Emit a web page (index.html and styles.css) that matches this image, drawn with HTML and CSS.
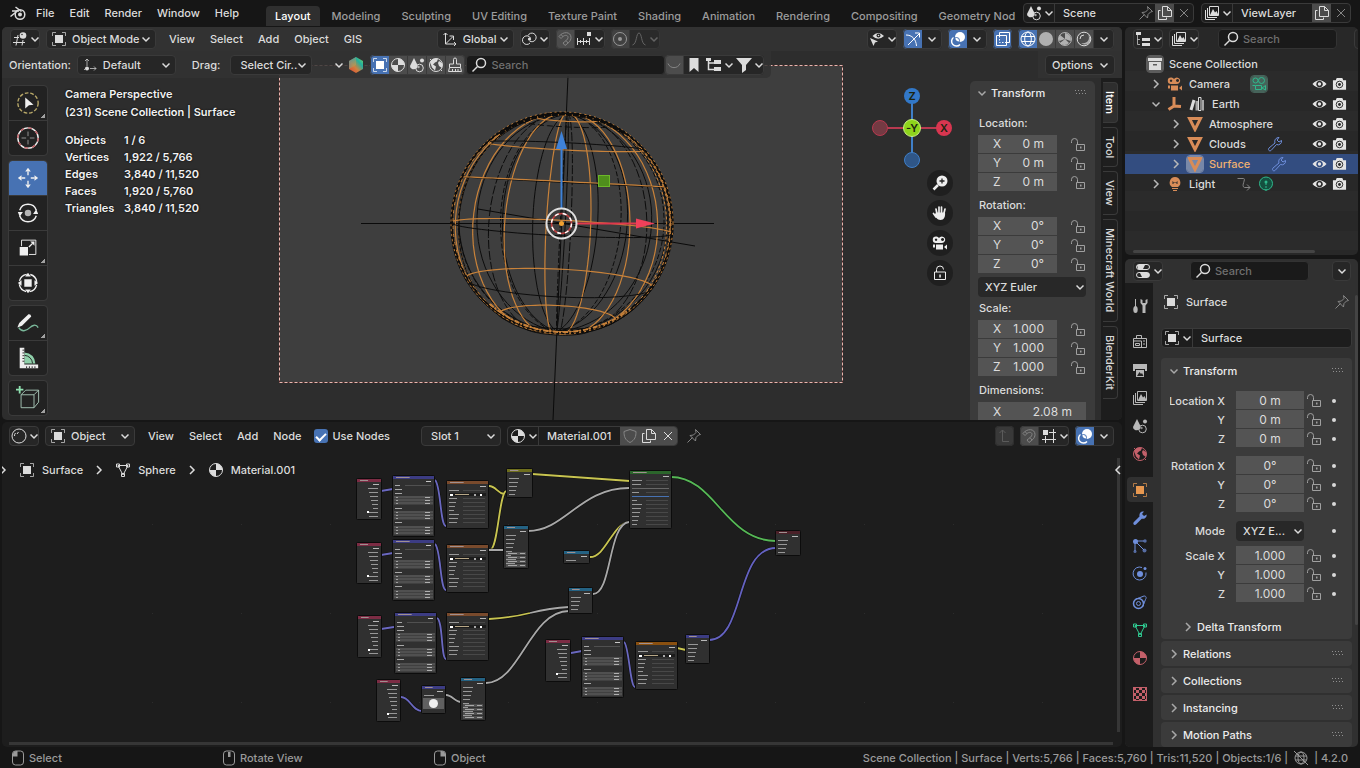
FILE: index.html
```html
<!DOCTYPE html>
<html lang="en">
<head>
    <meta charset="UTF-8">
    <meta name="viewport" content="width=device-width, initial-scale=1.0">
    <title>Blender</title>
    <link rel="stylesheet" href="styles.css">
</head>
<body>
<svg class="sprite" aria-hidden="true">
    <symbol id="blender" viewBox="0 0 16 16"><path class="s2" d="M.5 11.500L8 5.500M2 6h7M5.500 2l6 4.500"/><circle class="s2" cx="10" cy="9.500" r="4.800"/><circle class="f" cx="10" cy="9.500" r="2"/></symbol>
    <symbol id="down" viewBox="0 0 8 16"><path class="s2" d="M.5 6.500L4 10l3.500-3.500"/></symbol>
    <symbol id="right" viewBox="0 0 8 16"><path class="s2" d="M2 4l4 4-4 4"/></symbol>
    <symbol id="left" viewBox="0 0 8 16"><path class="s2" d="M6 4L2 8l4 4"/></symbol>
    <symbol id="editor" viewBox="0 0 16 16"><path class="s" d="M2 6.500h5M1 11.500h12M6 4L4 14.500M11 9l-1 5.500"/><circle class="f" cx="11" cy="4.500" r="3.300"/><circle cx="10" cy="3.500" r=".8" fill="#333"/></symbol>
    <symbol id="object" viewBox="0 0 16 16"><path class="s dim" d="M1.500 5V1.500H5M11 1.500h3.500V5M14.500 11v3.500H11M5 14.500H1.500V11"/><rect class="f" x="4" y="4" width="8" height="8"/></symbol>
    <symbol id="orient" viewBox="0 0 16 16"><path class="s dim" d="M5 9V2M3 4l2-2 2 2M8 11.500h6M12 9.500l2 2-2 2M2 13l1-1"/><circle class="f" cx="5" cy="11.500" r="2"/></symbol>
    <symbol id="global" viewBox="0 0 16 16"><path class="s" d="M3.500 13V2M1.500 4l2-2 2 2M3.500 13H14M12 11l2 2-2 2M3.500 13L11 5.500M7.500 5H11.500V9"/></symbol>
    <symbol id="pivot" viewBox="0 0 16 16"><path class="s" d="M9 12a4.300 4.300 0 1 1 .5-5M7 4.500A4.300 4.300 0 1 1 8.500 10"/><circle class="f" cx="8.500" cy="8" r="1.600"/></symbol>
    <symbol id="magnet" viewBox="0 0 16 16"><path class="s" d="M2 5.500C6 0 14 .5 14 6.500c0 4-3.500 6-6 8l-2-2.500C8.500 10 11 8.500 11 6.500 11 3.500 7 3.500 4 7.500zM4 3.500l2 2.200M9 9.500l2 2.500"/></symbol>
    <symbol id="increment" viewBox="0 0 16 16"><path class="s" d="M1.500 7v7M4.500 9v3M7.500 7v7M10.500 9v3M13.500 7v7M1.500 10.500h12"/><rect class="f" x="11" y="1" width="4" height="4"/></symbol>
    <symbol id="prop" viewBox="0 0 16 16"><circle class="s" cx="8" cy="8" r="6.500"/><circle class="f" cx="8" cy="8" r="2"/></symbol>
    <symbol id="falloff" viewBox="0 0 16 16"><path class="s" d="M1.500 14C6 13 5 2 8 2s2 11 6.500 12"/></symbol>
    <symbol id="viseye" viewBox="0 0 16 16"><path class="f" d="M1 7l8 3.500-3 1L4.500 15z"/><path class="f" d="M3.500 5Q9-1 15 5 9 10.500 3.500 5z"/><circle cx="9.500" cy="4.500" r="2" fill="#222"/><circle class="f" cx="9.500" cy="4.500" r=".8"/></symbol>
    <symbol id="arc" viewBox="0 0 16 16"><path class="s" d="M1 4c6 0 10 4 10.500 11M3 14L14 3M10 2h4.500v4.500"/></symbol>
    <symbol id="overlay" viewBox="0 0 16 16"><circle class="f" cx="10" cy="6" r="5"/><path class="s2" d="M3.500 6.500A4.800 4.800 0 1 0 10 13.500"/><circle cx="6.500" cy="9.500" r="3" fill="none" stroke="#4772b3"/></symbol>
    <symbol id="xray" viewBox="0 0 16 16"><path class="s" d="M1.500 4.500h10v10h-10zM4.500 4V1.500h10v10H12"/><path class="s" stroke-dasharray="1.500 1.500" d="M4.500 5v6.500H11"/></symbol>
    <symbol id="globe" viewBox="0 0 16 16"><circle class="s" cx="8" cy="8" r="7"/><ellipse class="s" cx="8" cy="8" rx="3.300" ry="7"/><path class="s" d="M1.500 5.500h13M1.500 10.500h13"/></symbol>
    <symbol id="ball" viewBox="0 0 16 16"><circle class="f dim" cx="8" cy="8" r="7"/></symbol>
    <symbol id="matball" viewBox="0 0 16 16"><circle class="s" cx="8" cy="8" r="6.500"/><path class="f" d="M8 1.500V8h6.500A6.500 6.500 0 0 0 8 1.500zM8 8v6.500A6.500 6.500 0 0 1 1.500 8z"/></symbol>
    <symbol id="preview" viewBox="0 0 16 16"><circle class="s dim" cx="8" cy="8" r="6.500"/><path class="f dim" d="M8 8V2a6 6 0 0 1 5.500 8zM8 8L3 4a6 6 0 0 0-.5 6zM8 8l-5 4a6 6 0 0 0 9 0z"/></symbol>
    <symbol id="rendered" viewBox="0 0 16 16"><circle class="s" cx="8" cy="8" r="6.800"/><path class="f dim" d="M12 3.500c3 5-1.500 10-7 8.500 5 4 11 0 9-6z"/><path class="s" d="M4 8a4 4 0 0 1 4-4"/></symbol>
    <symbol id="shader" viewBox="0 0 16 16"><circle class="s" cx="8" cy="8" r="7"/><path class="s" d="M6 6l1.500-2M3.500 8a4 4 0 0 1 1-3"/></symbol>
    <symbol id="scene" viewBox="0 0 16 16"><path class="f" d="M5 1l3.500 7A3.500 3.500 0 0 1 6 12 3.500 3.500 0 0 1 1 9z"/><circle class="s" cx="10.500" cy="11" r="3.800"/><circle class="f" cx="13" cy="3.500" r="2"/><circle class="f dim" cx="9.500" cy="10" r="1.200"/></symbol>
    <symbol id="world" viewBox="0 0 16 16"><circle class="s" cx="8" cy="8" r="6.500"/><path class="f" d="M2 5l3-3 5-.5-1 3-2 1-2 2 3 2-1 4-3-3zM11 4l3 2v5l-3-2-1-3z"/><path class="s" d="M2 2l2 2M14 14l-1.500-1.500"/></symbol>
    <symbol id="brush" viewBox="0 0 16 16"><path class="s" d="M6.500 7V2.500a1.500 1.500 0 0 1 3 0V7h4v3.500h-11V7zM2.500 10.500l-1 4h13l-1-4M5.500 14v-2M8.500 14v-2M11 14v-2"/></symbol>
    <symbol id="search" viewBox="0 0 16 16"><circle class="s2" cx="10" cy="6" r="4.500"/><path class="s2" d="M6.500 9.500L1.500 14.500"/></symbol>
    <symbol id="smile" viewBox="0 0 16 16"><path class="s" d="M2 6.500c2 5.500 10 5.500 12 0"/></symbol>
    <symbol id="bookmark" viewBox="0 0 16 16"><path class="f" d="M3.500 1h9v14L8 11l-4.500 4z"/></symbol>
    <symbol id="tree" viewBox="0 0 16 16"><path class="s2" d="M1 2h3M2.500 2v10.500H8M2.500 6H8"/><path class="f" d="M8 3h7v4H8zM8 10h7v4H8zM0 1h5v3H0z"/></symbol>
    <symbol id="outliner" viewBox="0 0 16 16"><path class="s dim" d="M2.500 4v9.500H5M2.500 8.500H5"/><path class="f" d="M1 1h5v3H1zM7 7h8v3H7zM7 12h8v3H7z"/></symbol>
    <symbol id="funnel" viewBox="0 0 16 16"><path class="f" d="M0 1h16l-6 7v5l-4 3V8z"/></symbol>
    <symbol id="zoom" viewBox="0 0 16 16"><circle class="f" cx="10" cy="6" r="5.500"/><path d="M10 3.500v5M7.500 6h5" stroke="#222" stroke-width="1.300"/><path d="M6 10l-4.500 4.500" stroke="currentColor" stroke-width="2.500"/></symbol>
    <symbol id="hand" viewBox="0 0 16 16"><path d="M5 9L4 4M7 8V2M9.500 8V2M12 8l1-4M4 12L1.500 8.500" fill="none" stroke="currentColor" stroke-width="1.700" stroke-linecap="round"/><path class="f" d="M4 7.500h9c.5 4-1 7.500-4.500 7.500S4 12 2.500 10z"/></symbol>
    <symbol id="movie" viewBox="0 0 16 16"><path class="f" fill-rule="evenodd" d="M4 1.500a3 3 0 0 1 3 1.500 3.300 3.300 0 1 1 3 5H4a3 3 0 1 1 0-6.500zM4 3.500a1.200 1.200 0 1 0 .1 0zM10.500 3a1.500 1.500 0 1 0 .1 0z"/><path class="f" d="M4 9.500h7v5H4zM12 12l3-2.500v5zM1 9.500h2v3H1z"/></symbol>
    <symbol id="moviedata" viewBox="0 0 16 16"><circle class="s" cx="4.500" cy="4.500" r="2.500"/><circle class="s" cx="10.500" cy="4.500" r="3"/><path class="s" d="M4.500 9.500h6v4h-6zM11 12l3.500-2.500v4.500zM1.500 9.500H4"/></symbol>
    <symbol id="lock" viewBox="0 0 16 16"><path class="s" d="M6.500 7.500h8v6h-8zM7.500 7V4.500a3 3 0 0 0-6 0V6"/><path class="f" d="M10 9.500h1.500v2H10z"/></symbol>
    <symbol id="biglock" viewBox="0 0 16 16"><path class="s" d="M2.500 7h11v7.500h-11zM4.500 7V4.500a3.500 3.500 0 0 1 7 0"/><path class="f" d="M7.300 9.500h1.500v3H7.300z"/></symbol>
    <symbol id="layers" viewBox="0 0 16 16"><path class="s" d="M5.500 1.500h9v9h-9zM3.500 3v9.500H13M1.500 5v9.500H11"/><path class="f" d="M6 10l3-6 2 3.500L12.500 6l2 4z"/></symbol>
    <symbol id="copy" viewBox="0 0 16 16"><path class="s" d="M5.500 1.500h5l4 4v6h-9zM10.500 1.500v4h4"/><path class="s" d="M3.500 5.500h-2v9h8v-2"/></symbol>
    <symbol id="x" viewBox="0 0 16 16"><path class="s" d="M4 4l8 8M12 4l-8 8"/></symbol>
    <symbol id="pin" viewBox="0 0 16 16"><path class="s" d="M9.500 1.500l5 5-2 .5-2.500 2.500-.5 3.500-5.500-5.500 3.500-.5L10 4.500zM6.500 9.500L1.500 14.500"/></symbol>
    <symbol id="box" viewBox="0 0 16 16"><path class="f" fill-rule="evenodd" d="M1 2h14v3H1zM2 6h12v8H2zm4 2v1.500h4V8z"/></symbol>
    <symbol id="empty" viewBox="0 0 16 16"><path class="s3" d="M7 1v9l7 .5M7 10l-5.500 3.500"/></symbol>
    <symbol id="books" viewBox="0 0 16 16"><path class="s3" d="M5 4L2 14"/><path class="f dim" d="M6.500 5H9v9.500H6.500zM13 4h2v10.500h-2z"/><path class="s" d="M9.500 1.500h2.500v13H9.500z"/></symbol>
    <symbol id="mesh" viewBox="0 0 16 16"><path class="s3" d="M2.500 2.500h11L8 13.500z"/></symbol>
    <symbol id="meshdata" viewBox="0 0 16 16"><path class="s" d="M3 3.500h10L8 13zM1.500 2h3v3h-3zM11.500 2h3v3h-3zM6.500 11.500h3v3h-3z"/></symbol>
    <symbol id="wrench" viewBox="0 0 16 16"><path class="s" d="M14.500 4.500a3.600 3.600 0 0 1-5 4L4 14.500c-1.500 1-3.500-.5-2-2.500L8 7c-1-3 1-5.500 4-5.500L10 4l2 2z"/></symbol>
    <symbol id="wrenchf" viewBox="0 0 16 16"><path class="f" d="M14.700 4.500a4 4 0 0 1-5 4.200L4 14.500c-1.800 1.200-3.500-.7-2.300-2.300L7.500 6.500C7 3 9 1 12 1.500L10 4l2 2z"/></symbol>
    <symbol id="light" viewBox="0 0 16 16"><path class="f" fill-rule="evenodd" d="M8 1a5.500 5.500 0 0 0-3 10h6A5.500 5.500 0 0 0 8 1zM5.500 5v3h1V6.500h3V8h1V5l-1 1h-3z"/><path class="s" d="M5 12.500h6M6 14.500h4"/></symbol>
    <symbol id="anim" viewBox="0 0 16 16"><path class="s" d="M1.500 2.500h6c3 0-3 8 1 9h5.500M11 8.500l3 3-3 3"/></symbol>
    <symbol id="lightdata" viewBox="0 0 16 16"><circle cx="8" cy="7.500" r="6.500" fill="#14503f"/><circle class="s" cx="8" cy="7.500" r="6.500"/><path class="s" stroke-dasharray="2 1" d="M8 7v8"/><circle class="f" cx="8" cy="6" r="1.500"/></symbol>
    <symbol id="eye" viewBox="0 0 16 16"><path class="f" fill-rule="evenodd" d="M.5 8Q8 0 15.500 8 8 16 .5 8zM8 4.500a3.500 3.500 0 1 0 .1 0z"/><circle class="f" cx="8" cy="8" r="1.800"/></symbol>
    <symbol id="photo" viewBox="0 0 16 16"><path class="f" d="M1 4h3l1-2.500h6L12 4h3v10H1z"/><circle cx="8" cy="8.500" r="3.500" fill="none" stroke="#262626"/><circle cx="8" cy="8.500" r="1.500" fill="#262626"/></symbol>
    <symbol id="props" viewBox="0 0 16 16"><rect class="s" x="1.500" y="1.500" width="13" height="5" rx="2.500"/><rect class="s" x="1.500" y="9.500" width="13" height="5" rx="2.500"/><path class="f" d="M2 2h8l-2 4H3zM5 10h9v4H7z"/></symbol>
    <symbol id="tools" viewBox="0 0 16 16"><path class="s" d="M3.500 1v9"/><ellipse class="f" cx="3.500" cy="11.500" rx="2.200" ry="3.500"/><path class="f" d="M8.500 1v4l2 2.500V15h3V7.500l2-2.500V1l-2 1v3h-3V2z"/></symbol>
    <symbol id="render" viewBox="0 0 16 16"><path class="s" d="M1.500 4.500h13v9h-13zM4.500 4V1.500h5V4M1.500 7h8v6M11 7h2M11 10h2"/><path class="s" d="M3.500 9.500h4v2h-4z"/></symbol>
    <symbol id="output" viewBox="0 0 16 16"><path class="f" d="M1 2h14v7h-2V7H3v2H1zM4 8h8v7H4z"/><path d="M5 14l2.500-4 1.500 2 1-1 1.500 3z" fill="#222"/></symbol>
    <symbol id="particles" viewBox="0 0 16 16"><path class="s" d="M3 3v10M3 3h9M4 4l8 8"/><circle class="f" cx="3.500" cy="3.500" r="2.500"/><circle class="f dim" cx="13" cy="3" r="1.700"/><circle class="f dim" cx="3" cy="13.500" r="1.500"/><circle class="f dim" cx="12.500" cy="12.500" r="2"/></symbol>
    <symbol id="physics" viewBox="0 0 16 16"><path class="s" d="M14 6.500a6.500 6.500 0 1 1-4-5"/><circle class="f" cx="8" cy="8" r="3"/><circle class="f" cx="13" cy="2.500" r="1.500"/></symbol>
    <symbol id="constraint" viewBox="0 0 16 16"><circle class="s2" cx="6.500" cy="9.500" r="5"/><circle class="s" cx="6.500" cy="9.500" r="2"/><path class="s" d="M3 5.500L12 2c2.500 0 2.500 2 1.500 3.500L10.500 13"/></symbol>
    <symbol id="checker" viewBox="0 0 16 16"><rect class="s" x="1.500" y="1.500" width="13" height="13"/><path class="f" d="M1 1h3v3H1zM7 1h3v3H7zM13 1h2v3h-2zM4 4h3v3H4zM10 4h3v3h-3zM1 7h3v3H1zM7 7h3v3H7zM13 7h2v3h-2zM4 10h3v3H4zM10 10h3v3h-3zM1 13h3v2H1zM7 13h3v2H7zM13 13h2v2h-2z"/></symbol>
    <symbol id="shield" viewBox="0 0 16 16"><path class="s" d="M8 1.500l6 2c0 5-1 8.500-6 11-5-2.500-6-6-6-11z"/></symbol>
    <symbol id="parent" viewBox="0 0 16 16"><path class="s" d="M6.500 2v11.500H13M3.500 5l3-3 3 3"/></symbol>
    <symbol id="gridsnap" viewBox="0 0 16 16"><path class="s" d="M4.500 8v7M12.500 1v14M1 11.500h14M8 4.500h7"/><rect class="f" x="2" y="2" width="5" height="5"/></symbol>
    <symbol id="mouse" viewBox="0 0 16 16"><rect class="s" x="2.500" y="1" width="11" height="14" rx="3"/></symbol>
    <symbol id="offline" viewBox="0 0 16 16"><circle class="s" cx="8" cy="8" r="6"/><ellipse class="s" cx="8" cy="8" rx="3" ry="6"/><path class="s" d="M2.500 6h11M2.500 10h11M1 1l14 14"/></symbol>
    <symbol id="dots" viewBox="0 0 12 6"><path class="f" d="M0 0h1v1H0zM3 0h1v1H3zM6 0h1v1H6zM9 0h1v1H9zM1 3h1v1H1zM4 3h1v1H4zM7 3h1v1H7zM10 3h1v1h-1z"/></symbol>

    <symbol id="t-select" viewBox="0 0 26 26"><circle cx="13" cy="13" r="11" fill="none" stroke="#b8a868" stroke-width="1.500" stroke-dasharray="4 2"/><path class="f" d="M10 7l9 8-5 .5L10 19z"/></symbol>
    <symbol id="t-cursor" viewBox="0 0 26 26"><circle cx="13" cy="13" r="11" fill="none" stroke="#eee" stroke-width="1.500"/><circle cx="13" cy="13" r="11" fill="none" stroke="#c05a60" stroke-width="1.500" stroke-dasharray="4 4.600"/><path d="M13 6v5M13 15v5M6 13h5M15 13h5" stroke="#999"/></symbol>
    <symbol id="t-move" viewBox="0 0 26 26"><path class="f" d="M13 2l3 4h-6zM13 24l3-4h-6zM2 13l4-3v6zM24 13l-4-3v6z"/><path class="s2" d="M13 6v4M13 16v4M6 13h4M16 13h4"/></symbol>
    <symbol id="t-rotate" viewBox="0 0 26 26"><path class="s2" d="M4 10a9.500 9.500 0 0 1 18 0M4 16a9.500 9.500 0 0 0 18 0"/><path class="f" d="M2 12h5.500L4 17zM24 14h-5.500L22 9z"/><circle class="f dim" cx="13" cy="13" r="3.500"/></symbol>
    <symbol id="t-scale" viewBox="0 0 26 26"><path class="s" d="M6 11V4.500h15.500V20H14"/><path class="f" d="M4 12h9v9H4zM20 6v4.500L15.500 6z"/><path class="s2" d="M14 12l4-4"/></symbol>
    <symbol id="t-trans" viewBox="0 0 26 26"><circle class="s2" cx="13" cy="13" r="9.500" stroke-dasharray="11 4" stroke-dashoffset="-2"/><path class="f" d="M9 9h8v8H9zM13 2l3 4h-6zM13 24l3-4h-6zM2 13l4-3v6zM24 13l-4-3v6z"/></symbol>
    <symbol id="t-pen" viewBox="0 0 26 26"><path d="M3 18c3 5 8 4 12 0 3-3 7-4 9 0" fill="none" stroke="#7ab89a" stroke-width="1.500"/><path class="f" d="M1.500 18l2-5 10-9.500q2.500-.5 3 2.500l-10 10z"/></symbol>
    <symbol id="t-measure" viewBox="0 0 26 26"><path d="M9 19V7q11 1 12 12z" fill="#8fd0aa"/><path d="M9 10q8 1 9 9" fill="none" stroke="#222"/><path d="M4 2h5v18h15v4H4z" fill="#eee"/><path d="M7 4.500h2M7 7.500h2M7 10.500h2M7 13.500h2M7 16.500h2M11.500 22v2M14.500 22v2M17.500 22v2M20.500 22v2" stroke="#222"/></symbol>
    <symbol id="t-cube" viewBox="0 0 26 26"><path d="M5.500 9.500h14v14h-14zM5.500 9.500l5-5h14l-5 5M24.500 4.500v13l-5 6" fill="none" stroke="#a8c8b8"/><path d="M4 0v8M0 4h8" stroke="#8fe0b0" stroke-width="2"/></symbol>
</svg>

<header class="topbar">
    <nav class="menus main-menus">
        <svg class="ic"><use href="#blender"/></svg>
        <button>File</button><button>Edit</button><button>Render</button><button>Window</button><button>Help</button>
    </nav>
    <nav class="workspaces">
        <button class="active">Layout</button><button>Modeling</button><button>Sculpting</button><button>UV Editing</button><button>Texture Paint</button><button>Shading</button><button>Animation</button><button>Rendering</button><button>Compositing</button><button>Geometry Nod</button>
    </nav>
    <div class="idblock">
        <button class="icdrop"><svg class="ic"><use href="#scene"/></svg><svg class="ch"><use href="#down"/></svg></button>
        <input class="idname" aria-label="Scene" value="Scene">
        <button class="sq off"><svg class="ic"><use href="#pin"/></svg></button>
        <button class="sq lit"><svg class="ic"><use href="#copy"/></svg></button>
        <button class="sq off"><svg class="ic"><use href="#x"/></svg></button>
    </div>
    <div class="idblock">
        <button class="icdrop"><svg class="ic"><use href="#layers"/></svg><svg class="ch"><use href="#down"/></svg></button>
        <input class="idname layer-name" aria-label="View layer" value="ViewLayer">
        <button class="sq lit"><svg class="ic"><use href="#copy"/></svg></button>
        <button class="sq off"><svg class="ic"><use href="#x"/></svg></button>
    </div>
</header>

<main class="screen">
    <div class="left">
        <!-- 3D viewport -->
        <section class="viewport">
            <svg class="scene" id="scene3d"></svg>
            <div class="head">
                <button class="icdrop box"><svg class="ic"><use href="#editor"/></svg><svg class="ch"><use href="#down"/></svg></button>
                <span class="pick mode"><svg class="ic"><use href="#object"/></svg><select aria-label="Mode"><option>Object Mode</option></select><svg class="ch"><use href="#down"/></svg></span>
                <nav class="menus"><button>View</button><button>Select</button><button>Add</button><button>Object</button><button>GIS</button></nav>
                <span class="grow-left"></span>
                <span class="pick global"><svg class="ic"><use href="#global"/></svg><select aria-label="Transform orientation"><option>Global</option></select><svg class="ch"><use href="#down"/></svg></span>
                <button class="icdrop box"><svg class="ic"><use href="#pivot"/></svg><svg class="ch"><use href="#down"/></svg></button>
                <span class="group"><button class="sq lit off"><svg class="ic"><use href="#magnet"/></svg></button><button class="icdrop"><svg class="ic"><use href="#increment"/></svg><svg class="ch"><use href="#down"/></svg></button></span>
                <span class="group off2"><button class="sq lit"><svg class="ic"><use href="#prop"/></svg></button><button class="icdrop off"><svg class="ic"><use href="#falloff"/></svg><svg class="ch"><use href="#down"/></svg></button></span>
                <span class="grow-right"></span>
                <button class="icdrop box"><svg class="ic"><use href="#viseye"/></svg><svg class="ch"><use href="#down"/></svg></button>
                <span class="group"><button class="sq on"><svg class="ic"><use href="#arc"/></svg></button><button class="sq more-opts"><svg class="ch"><use href="#down"/></svg></button></span>
                <span class="group"><button class="sq on"><svg class="ic"><use href="#overlay"/></svg></button><button class="sq more-opts"><svg class="ch"><use href="#down"/></svg></button></span>
                <span class="group"><button class="sq on"><svg class="ic"><use href="#xray"/></svg></button></span>
                <span class="group"><button class="sq on"><svg class="ic"><use href="#globe"/></svg></button><button class="sq lit"><svg class="ic"><use href="#ball"/></svg></button><button class="sq lit"><svg class="ic"><use href="#preview"/></svg></button><button class="sq lit"><svg class="ic"><use href="#rendered"/></svg></button><button class="sq more-opts"><svg class="ch"><use href="#down"/></svg></button></span>
            </div>
            <div class="toolhead">
                <div class="tool-left">
                    <label for="orientation">Orientation:</label>
                    <span class="pick orient"><svg class="ic"><use href="#orient"/></svg><select id="orientation"><option>Default</option></select><svg class="ch"><use href="#down"/></svg></span>
                    <label for="drag" class="drag-label">Drag:</label>
                    <span class="pick drag"><select id="drag"><option>Select Cir...</option></select><svg class="ch"><use href="#down"/></svg></span>
                    <button class="bare bk-menu" aria-label="BlenderKit"><svg class="ch"><use href="#down"/></svg>
                        <svg class="ic" viewBox="0 0 16 16"><defs><linearGradient id="hex" x1="1" y1="0" x2="0" y2="1"><stop offset="0" stop-color="#7ed957"/><stop offset=".3" stop-color="#20b0a0"/><stop offset=".6" stop-color="#d08040"/><stop offset="1" stop-color="#e04030"/></linearGradient><linearGradient id="hexb" x1="0" y1="0" x2="1" y2="1"><stop offset="0" stop-color="#1a9ad0"/><stop offset="1" stop-color="#e8a030"/></linearGradient></defs><path d="M8 0l7 4v8l-7 4-7-4V4z" fill="url(#hex)"/><path d="M8 0v8l-7 4V4z" fill="url(#hexb)" opacity=".6"/></svg></button>
                    <span class="group"><button class="sq on"><svg class="ic"><use href="#object"/></svg></button><button class="sq lit"><svg class="ic"><use href="#matball"/></svg></button><button class="sq lit"><svg class="ic"><use href="#scene"/></svg></button><button class="sq lit"><svg class="ic"><use href="#world"/></svg></button><button class="sq lit"><svg class="ic"><use href="#brush"/></svg></button></span>
                    <label class="search bk"><svg class="ic"><use href="#search"/></svg><input type="text" aria-label="Search assets" placeholder="Search"></label>
                    <span class="group"><button class="sq lit off"><svg class="ic"><use href="#smile"/></svg></button><button class="sq more-opts"><svg class="ic"><use href="#bookmark"/></svg></button><button class="icdrop"><svg class="ic"><use href="#tree"/></svg><svg class="ch"><use href="#down"/></svg></button><button class="icdrop"><svg class="ic"><use href="#funnel"/></svg><svg class="ch"><use href="#down"/></svg></button></span>
                </div>
                <div class="tool-right"><button class="options">Options<svg class="ch"><use href="#down"/></svg></button></div>
            </div>
            <div class="view-body">
                <div class="toolbar">
                    <div class="tgroup"><button class="more"><svg><use href="#t-select"/></svg></button><button><svg><use href="#t-cursor"/></svg></button></div>
                    <div class="tgroup"><button class="active"><svg><use href="#t-move"/></svg></button><button><svg><use href="#t-rotate"/></svg></button><button class="more"><svg><use href="#t-scale"/></svg></button><button><svg><use href="#t-trans"/></svg></button></div>
                    <div class="tgroup"><button class="more"><svg><use href="#t-pen"/></svg></button><button><svg><use href="#t-measure"/></svg></button></div>
                    <div class="tgroup"><button class="more"><svg><use href="#t-cube"/></svg></button></div>
                </div>
                <div class="stats">
                    <p>Camera Perspective</p>
                    <p>(231) Scene Collection | Surface</p>
                    <dl>
                        <dt>Objects</dt><dd>1 / 6</dd>
                        <dt>Vertices</dt><dd>1,922 / 5,766</dd>
                        <dt>Edges</dt><dd>3,840 / 11,520</dd>
                        <dt>Faces</dt><dd>1,920 / 5,760</dd>
                        <dt>Triangles</dt><dd>3,840 / 11,520</dd>
                    </dl>
                </div>
                <div class="gizmos">
                    <svg class="axes" viewBox="0 2 82 79">
                        <path d="M41 41V9M41 41v32" stroke="#3f7fc8" stroke-width="2"/>
                        <path d="M41 41h32M41 41H9" stroke="#b8394f" stroke-width="2"/>
                        <circle cx="9" cy="41" r="7.500" fill="#743a43" stroke="#b8394f"/>
                        <circle cx="41" cy="73" r="7.500" fill="#2f5687" stroke="#3f7fc8"/>
                        <circle cx="41" cy="9" r="8" fill="#3278c8"/><circle cx="73" cy="41" r="8" fill="#d83650"/>
                        <circle cx="41" cy="41" r="8.500" fill="#8ed41c" stroke="#c8f080"/>
                        <text x="41" y="13">Z</text><text x="73" y="45">X</text><text x="41" y="45">-Y</text>
                    </svg>
                    <button class="round"><svg class="ic"><use href="#zoom"/></svg></button>
                    <button class="round"><svg class="ic"><use href="#hand"/></svg></button>
                    <button class="round"><svg class="ic"><use href="#movie"/></svg></button>
                    <button class="round"><svg class="ic"><use href="#biglock"/></svg></button>
                </div>
                <div class="npanel">
                    <button class="ptitle"><svg class="ch"><use href="#down"/></svg>Transform<svg class="dots"><use href="#dots"/></svg></button>
                    <p>Location:</p>
                    <div class="fields" data-values="0 m,0 m,0 m"></div>
                    <p>Rotation:</p>
                    <div class="fields" data-values="0°,0°,0°"></div>
                    <span class="pick flat"><select aria-label="Rotation mode"><option>XYZ Euler</option></select><svg class="ch"><use href="#down"/></svg></span>
                    <p>Scale:</p>
                    <div class="fields" data-values="1.000,1.000,1.000"></div>
                    <p>Dimensions:</p>
                    <label class="num wide"><span>X</span><input value="2.08 m"></label>
                </div>
                <nav class="ntabs"><button class="active">Item</button><button>Tool</button><button>View</button><button>Minecraft World</button><button>BlenderKit</button></nav>
            </div>
        </section>

        <!-- shader editor -->
        <section class="nodes">
            <svg class="scene" id="graph"></svg>
            <div class="head">
                <button class="icdrop box"><svg class="ic"><use href="#shader"/></svg><svg class="ch"><use href="#down"/></svg></button>
                <span class="pick shtype"><svg class="ic"><use href="#object"/></svg><select aria-label="Shader type"><option>Object</option></select><svg class="ch"><use href="#down"/></svg></span>
                <nav class="menus"><button>View</button><button>Select</button><button>Add</button><button>Node</button></nav>
                <label class="check"><input type="checkbox" checked>Use Nodes</label>
                <span class="pick slot"><select aria-label="Slot"><option>Slot 1</option></select><svg class="ch"><use href="#down"/></svg></span>
                <div class="idblock">
                    <button class="icdrop"><svg class="ic"><use href="#matball"/></svg><svg class="ch"><use href="#down"/></svg></button>
                    <input class="idname" aria-label="Material" value="Material.001">
                    <button class="sq lit off"><svg class="ic"><use href="#shield"/></svg></button>
                    <button class="sq lit"><svg class="ic"><use href="#copy"/></svg></button>
                    <button class="sq lit"><svg class="ic"><use href="#x"/></svg></button>
                </div>
                <button class="bare off"><svg class="ic"><use href="#pin"/></svg></button>
                <span class="grow-left"></span>
                <span class="group off2"><button class="sq lit off"><svg class="ic"><use href="#parent"/></svg></button></span>
                <span class="group"><button class="sq lit off"><svg class="ic"><use href="#magnet"/></svg></button><button class="icdrop"><svg class="ic"><use href="#gridsnap"/></svg><svg class="ch"><use href="#down"/></svg></button></span>
                <span class="group"><button class="sq on"><svg class="ic"><use href="#overlay"/></svg></button><button class="sq more-opts"><svg class="ch"><use href="#down"/></svg></button></span>
            </div>
            <div class="crumbs">
                <svg class="ch"><use href="#right"/></svg>
                <span class="crumb"><svg class="ic"><use href="#object"/></svg>Surface</span>
                <svg class="ch"><use href="#right"/></svg>
                <span class="crumb"><svg class="ic"><use href="#meshdata"/></svg>Sphere</span>
                <svg class="ch"><use href="#right"/></svg>
                <span class="crumb"><svg class="ic"><use href="#matball"/></svg>Material.001</span>
                <svg class="ch last"><use href="#left"/></svg>
            </div>
        </section>
    </div>

    <div class="side">
        <section class="outliner">
            <div class="head">
                <button class="icdrop box"><svg class="ic"><use href="#outliner"/></svg><svg class="ch"><use href="#down"/></svg></button>
                <button class="icdrop box"><svg class="ic"><use href="#layers"/></svg><svg class="ch"><use href="#down"/></svg></button>
                <label class="search out"><svg class="ic"><use href="#search"/></svg><input type="text" aria-label="Filter outliner" placeholder="Search"></label>
                <button class="icdrop box"><svg class="ic"><use href="#funnel"/></svg></button>
            </div>
            <ul class="rows">
                <li class="root"><svg class="ic hl"><use href="#box"/></svg>Scene Collection</li>
                <li class="l1"><svg class="ch"><use href="#right"/></svg><svg class="ic obj"><use href="#movie"/></svg>Camera<svg class="ic data hl far"><use href="#moviedata"/></svg><span class="vis"><svg class="ic"><use href="#eye"/></svg><svg class="ic"><use href="#photo"/></svg></span></li>
                <li class="l1"><svg class="ch"><use href="#down"/></svg><svg class="ic obj"><use href="#empty"/></svg><svg class="ic books"><use href="#books"/></svg>Earth<span class="vis"><svg class="ic"><use href="#eye"/></svg><svg class="ic"><use href="#photo"/></svg></span></li>
                <li class="l2"><svg class="ch"><use href="#right"/></svg><svg class="ic obj"><use href="#mesh"/></svg>Atmosphere<span class="vis"><svg class="ic"><use href="#eye"/></svg><svg class="ic"><use href="#photo"/></svg></span></li>
                <li class="l2"><svg class="ch"><use href="#right"/></svg><svg class="ic obj"><use href="#mesh"/></svg>Clouds<svg class="ic mod far"><use href="#wrench"/></svg><span class="vis"><svg class="ic"><use href="#eye"/></svg><svg class="ic"><use href="#photo"/></svg></span></li>
                <li class="l2 selected"><svg class="ch"><use href="#right"/></svg><svg class="ic obj hl"><use href="#mesh"/></svg>Surface<svg class="ic mod far"><use href="#wrench"/></svg><span class="vis"><svg class="ic"><use href="#eye"/></svg><svg class="ic"><use href="#photo"/></svg></span></li>
                <li class="l1"><svg class="ch"><use href="#right"/></svg><svg class="ic obj"><use href="#light"/></svg>Light<svg class="ic far muted"><use href="#anim"/></svg><svg class="ic data"><use href="#lightdata"/></svg><span class="vis"><svg class="ic"><use href="#eye"/></svg><svg class="ic"><use href="#photo"/></svg></span></li>
            </ul>
            <div class="hscroll"></div>
        </section>

        <section class="properties">
            <div class="head">
                <button class="icdrop box"><svg class="ic"><use href="#props"/></svg><svg class="ch"><use href="#down"/></svg></button>
                <label class="search prop"><svg class="ic"><use href="#search"/></svg><input type="text" aria-label="Search properties" placeholder="Search"></label>
                <button class="sq box"><svg class="ch"><use href="#down"/></svg></button>
            </div>
            <div class="prop-body">
                <nav class="ptabs">
                    <button class="gap"><svg class="ic"><use href="#tools"/></svg></button>
                    <button><svg class="ic"><use href="#render"/></svg></button>
                    <button><svg class="ic"><use href="#output"/></svg></button>
                    <button><svg class="ic"><use href="#layers"/></svg></button>
                    <button><svg class="ic"><use href="#scene"/></svg></button>
                    <button class="gap red"><svg class="ic"><use href="#world"/></svg></button>
                    <button class="active"><svg class="ic"><use href="#object"/></svg></button>
                    <button class="blue"><svg class="ic"><use href="#wrenchf"/></svg></button>
                    <button class="blue"><svg class="ic"><use href="#particles"/></svg></button>
                    <button class="blue"><svg class="ic"><use href="#physics"/></svg></button>
                    <button class="blue"><svg class="ic"><use href="#constraint"/></svg></button>
                    <button class="green"><svg class="ic"><use href="#meshdata"/></svg></button>
                    <button class="gap red"><svg class="ic"><use href="#matball"/></svg></button>
                    <button class="red"><svg class="ic"><use href="#checker"/></svg></button>
                </nav>
                <div class="panels">
                    <div class="context"><svg class="ic"><use href="#object"/></svg>Surface<svg class="ic muted"><use href="#pin"/></svg></div>
                    <div class="idblock wide">
                        <button class="icdrop"><svg class="ic"><use href="#object"/></svg><svg class="ch"><use href="#down"/></svg></button>
                        <input class="idname" aria-label="Object name" value="Surface">
                    </div>
                    <div class="panel">
                        <button class="ptitle"><svg class="ch"><use href="#down"/></svg>Transform<svg class="dots"><use href="#dots"/></svg></button>
                        <div class="pfields" data-name="Location" data-values="0 m,0 m,0 m"></div>
                        <div class="pfields" data-name="Rotation" data-values="0°,0°,0°"></div>
                        <div class="prow"><label for="pmode">Mode</label><span class="pick flat"><select id="pmode"><option>XYZ E...</option></select><svg class="ch"><use href="#down"/></svg></span><span></span><i class="dot"></i></div>
                        <div class="pfields" data-name="Scale" data-values="1.000,1.000,1.000"></div>
                        <button class="ptitle sub"><svg class="ch"><use href="#right"/></svg>Delta Transform</button>
                    </div>
                    <div class="panel"><button class="ptitle"><svg class="ch"><use href="#right"/></svg>Relations<svg class="dots"><use href="#dots"/></svg></button></div>
                    <div class="panel"><button class="ptitle"><svg class="ch"><use href="#right"/></svg>Collections<svg class="dots"><use href="#dots"/></svg></button></div>
                    <div class="panel"><button class="ptitle"><svg class="ch"><use href="#right"/></svg>Instancing<svg class="dots"><use href="#dots"/></svg></button></div>
                    <div class="panel"><button class="ptitle"><svg class="ch"><use href="#right"/></svg>Motion Paths<svg class="dots"><use href="#dots"/></svg></button></div>
                </div>
                <div class="vscroll"></div>
            </div>
        </section>
    </div>
</main>

<footer class="status">
    <span class="hint"><svg class="ic" viewBox="0 0 16 16"><use href="#mouse"/><path class="f" d="M3 4q0-2.500 3-3h1.500v5.500H3z"/></svg>Select</span>
    <span class="hint"><svg class="ic" viewBox="0 0 16 16"><use href="#mouse"/><path class="f" d="M7 2h2.500v5H7z"/></svg>Rotate View</span>
    <span class="hint"><svg class="ic" viewBox="0 0 16 16"><use href="#mouse"/><path class="f" d="M8.500 1H10q3 .5 3 3v2.500H8.500z"/></svg>Object</span>
    <span class="info">Scene Collection | Surface | Verts:5,766 | Faces:5,760 | Tris:11,520 | Objects:1/6 |<svg class="ic"><use href="#offline"/></svg>| 4.2.0</span>
</footer>
<script src="script.js"></script>
</body>
</html>
```

FILE: styles.css
```css
*
{
    box-sizing: border-box;
}
body
{
    margin: 0;
    height: 100vh;
    display: flex;
    flex-direction: column;
    overflow: hidden;
    background: #161616;
    color: #dcdcdc;
    font: 500 11px/16px Inter, sans-serif;
}
button, input, select
{
    font: inherit;
    color: inherit;
    background: none;
    border: 0;
    padding: 0;
    margin: 0;
    outline: none;
}
p, dl, dd, ul
{
    margin: 0;
    padding: 0;
}
button
{
    display: flex;
    align-items: center;
    white-space: nowrap;
}
.sprite
{
    position: absolute;
    width: 0;
    height: 0;
}
.s, .s2, .s3
{
    fill: none;
    stroke: currentColor;
}
.s2
{
    stroke-width: 1.5;
}
.s3
{
    stroke-width: 3;
}
.f
{
    fill: currentColor;
}
.dim
{
    opacity: 0.7;
}
.ic
{
    width: 16px;
    height: 16px;
    flex: none;
}
.ch
{
    width: 8px;
    height: 16px;
    flex: none;
}
.off > svg, .muted
{
    color: #858585;
}
.grow-left
{
    flex: 2;
}
.grow-right
{
    flex: 7;
}

/* shared controls */
.icdrop
{
    width: 30px;
    height: 18px;
    justify-content: center;
    gap: 3px;
    flex: none;
}
.box, .pick, .options
{
    height: 20px;
    background: #262626;
    border: 1px solid #3a3a3a;
    border-radius: 4px;
}
.pick
{
    display: flex;
    align-items: center;
    padding: 0 5px 0 4px;
    flex: none;
}
.pick select
{
    appearance: none;
    flex: 1;
    min-width: 0;
    padding-left: 5px;
}
.pick.flat
{
    border: 0;
    background: #282828;
}
.group, .idblock
{
    display: flex;
    align-items: center;
    overflow: hidden;
    flex: none;
    height: 20px;
    border-radius: 4px;
}
.group
{
    background: #262626;
    outline: 1px solid #3a3a3a;
    outline-offset: -1px;
}
.sq
{
    width: 19px;
    height: 100%;
    justify-content: center;
    flex: none;
}
.sq.box
{
    height: 20px;
}
.more-opts
{
    width: 20px;
}
.lit
{
    background: #4c4c4c;
}
.group .lit
{
    border-right: 1px solid #3a3a3a;
}
.on
{
    background: #4772b3;
    color: #ffffff;
}
.off2
{
    opacity: 0.6;
}
.idblock
{
    background: #1d1d1d;
    border: 1px solid #3a3a3a;
}
.idname
{
    width: 82px;
    height: 18px;
    padding: 0 4px 0 8px;
    border-left: 1px solid #3a3a3a;
    min-width: 0;
}
.layer-name
{
    width: 80px;
}
.search
{
    display: flex;
    align-items: center;
    height: 20px;
    padding: 0 4px;
    gap: 4px;
    background: #1a1a1a;
    border: 1px solid #333333;
    border-radius: 4px;
}
.search input
{
    width: 100%;
    min-width: 0;
}
.search input::placeholder
{
    color: #707070;
}
.head
{
    position: relative;
    display: flex;
    align-items: center;
    gap: 6px;
    height: 24px;
    padding: 0 8px;
    flex: none;
}
.menus
{
    display: flex;
    gap: 1px;
}
.menus button
{
    padding: 0 7px;
}
.bare
{
    padding: 0 2px;
}

/* top bar */
.topbar
{
    display: flex;
    height: 27px;
    padding: 3px 9px 0 10px;
    gap: 7px;
    flex: none;
}
.main-menus
{
    height: 20px;
    align-items: center;
}
.main-menus .ic
{
    margin-right: 2px;
}
.workspaces
{
    display: flex;
    flex: 1;
    gap: 3px;
    min-width: 0;
    overflow: hidden;
    padding: 3px 0 0 13px;
    color: #9c9c9c;
}
.workspaces button
{
    height: 20px;
    padding: 0 9px;
    border-radius: 4px 4px 0 0;
    flex: none;
}
.workspaces .active
{
    background: #2f2f2f;
    color: #ffffff;
}

/* screen */
.screen
{
    display: flex;
    flex: 1;
    min-height: 0;
    gap: 3px;
    padding: 0 2px;
}
.left
{
    display: flex;
    flex-direction: column;
    flex: 1;
    min-width: 0;
    gap: 2px;
}
.viewport
{
    position: relative;
    display: flex;
    flex-direction: column;
    flex: 393 1 0;
    min-height: 0;
    overflow: hidden;
    border-radius: 5px;
    background: #2d2d2d;
}
.scene
{
    position: absolute;
    left: 0;
    top: 0;
    width: 100%;
    height: 100%;
}
.viewport .head
{
    background: #323232;
}
.mode
{
    width: 110px;
}
.global
{
    width: 77px;
}
.toolhead
{
    position: relative;
    display: flex;
    justify-content: space-between;
    height: 27px;
    flex: none;
}
.tool-left, .tool-right
{
    display: flex;
    align-items: center;
    background: rgba(50, 50, 50, 0.85);
    padding: 0 7px;
}
.tool-left
{
    gap: 6px;
    border-radius: 0 0 5px 0;
}
.orient
{
    width: 99px;
}
.drag-label
{
    padding: 0 4px 0 10px;
}
.drag
{
    width: 82px;
}
.bk-menu
{
    gap: 5px;
    padding: 0 0 0 17px;
}
.bk
{
    width: 199px;
    margin: 0 -6px 0 -5px;
}
.options
{
    gap: 7px;
    padding: 0 6px;
}
.view-body
{
    position: relative;
    display: flex;
    flex: 1;
    min-height: 0;
    padding-left: 7px;
}
.toolbar
{
    display: flex;
    flex-direction: column;
    gap: 6px;
    padding-top: 8px;
}
.tgroup
{
    display: flex;
    flex-direction: column;
    gap: 1px;
    background: #3a3a3a;
    outline: 1px solid #3a3a3a;
    border-radius: 3px;
    overflow: hidden;
}
.tgroup button
{
    width: 38px;
    height: 34px;
    justify-content: center;
    background: #222222;
    color: #f0f0f0;
    flex: none;
}
.tgroup .active
{
    background: #4772b3;
}
.tgroup .more
{
    background: linear-gradient(135deg, transparent 50%, #a0a0a0 50%) right 2px bottom 2px / 4px 4px no-repeat #222222;
}
.tgroup svg
{
    width: 24px;
    height: 24px;
}
.stats
{
    flex: 1;
    padding: 7px 0 0 18px;
    color: #f2f2f2;
    font-weight: 600;
    line-height: 18px;
    text-shadow: 0 0 2px #000000;
}
.stats dl
{
    display: grid;
    grid-template-columns: 59px auto;
    justify-content: start;
    line-height: 17px;
    padding-top: 11px;
}
.gizmos
{
    display: flex;
    flex-direction: column;
    align-items: flex-end;
    gap: 4px;
    padding: 11px 17px 0 0;
}
.axes
{
    width: 82px;
    height: 79px;
    margin-bottom: -2px;
    overflow: visible;
}
.axes text
{
    font-size: 11px;
    font-weight: 600;
    text-anchor: middle;
    fill: #1c2410;
}
.round
{
    width: 26px;
    height: 26px;
    border-radius: 13px;
    justify-content: center;
    background: #1f1f1f;
    color: #eeeeee;
}
.npanel
{
    width: 125px;
    margin: 3px 6px 0 0;
    padding: 0 8px;
    overflow: hidden;
    background: #3b3b3b;
    border-radius: 5px 5px 0 0;
}
.ptitle
{
    width: 100%;
    height: 25px;
    gap: 5px;
    color: #ececec;
}
.npanel .ptitle
{
    height: 24px;
}
.dots
{
    width: 12px;
    height: 6px;
    margin-left: auto;
    color: #909090;
}
.ptitle .ch
{
    color: #a8a8a8;
}
.npanel p
{
    line-height: 16px;
    padding: 5px 0 4px 1px;
}
.npanel .ptitle + p
{
    padding-top: 10px;
}
.npanel .pick + p
{
    padding-top: 3px;
}
.fields, .pfields
{
    display: grid;
    overflow: hidden;
}
.fields .num, .prow input
{
    border-bottom: 1px solid #3b3b3b;
}
.frow
{
    display: flex;
    justify-content: space-between;
    align-items: center;
    padding-right: 1px;
}
.frow .ic
{
    color: #a0a0a0;
}
.num
{
    display: flex;
    align-items: center;
    width: 79px;
    height: 19px;
    padding: 0 13px 0 15px;
    background: #545454;
    font-size: 12px;
    font-weight: 400;
}
.num input
{
    width: 100%;
    min-width: 0;
    text-align: right;
}
.num.wide
{
    width: 108px;
    padding-right: 14px;
}
.npanel .pick
{
    margin-top: 3px;
    width: 108px;
    padding: 0 2px;
}
.ntabs
{
    display: flex;
    flex-direction: column;
    gap: 4px;
    width: 21px;
    padding: 4px 4px 0 2px;
    background: #1d1d1d;
}
.ntabs button
{
    writing-mode: vertical-rl;
    width: 15px;
    padding: 8px 0;
    border: 1px solid #3a3a3a;
    border-left: 0;
    border-radius: 0 4px 4px 0;
    color: #d8d8d8;
    background: #1f1f1f;
}
.ntabs .active
{
    background: #2e2e2e;
    color: #ffffff;
}

/* shader editor */
.nodes
{
    position: relative;
    flex: 325 1 0;
    min-height: 0;
    overflow: hidden;
    border-radius: 5px;
    background: #1d1d1d;
}
.nodes .head
{
    height: 28px;
    padding-left: 7px;
}
.shtype
{
    width: 90px;
}
.check
{
    display: flex;
    align-items: center;
    gap: 4px;
    margin-right: 25px;
}
.check input
{
    appearance: none;
    width: 14px;
    height: 14px;
    border-radius: 3px;
    background: #4772b3;
    display: grid;
    place-items: center;
}
.check input::before
{
    content: "";
    width: 8px;
    height: 4px;
    border: solid #ffffff;
    border-width: 0 0 2px 2px;
    transform: rotate(-45deg);
}
.slot
{
    width: 80px;
}
.crumbs
{
    position: relative;
    display: flex;
    align-items: center;
    height: 40px;
    margin-left: -3px;
    gap: 12px;
}
.crumb
{
    display: flex;
    align-items: center;
    gap: 7px;
}
.last
{
    margin-left: auto;
}

/* outliner */
.side
{
    display: flex;
    flex-direction: column;
    width: 233px;
    gap: 4px;
}
.outliner, .properties
{
    display: flex;
    flex-direction: column;
    min-height: 0;
    overflow: hidden;
    border-radius: 5px;
}
.outliner
{
    flex: 228 1 0;
    background: #282828;
}
.outliner .head
{
    overflow: hidden;
}
.out
{
    width: 119px;
    margin: 0 11px 0 13px;
    flex: none;
}
.rows
{
    flex: 1;
    list-style: none;
    padding-top: 3px;
    overflow: hidden;
    background: repeating-linear-gradient(#282828 0 20px, #2b2b2b 20px 40px);
}
.rows li
{
    display: flex;
    align-items: center;
    height: 20px;
    gap: 6px;
    padding-right: 11px;
}
.root
{
    padding-left: 22px;
}
.rows .l1
{
    padding-left: 27px;
}
.rows .l2
{
    padding-left: 47px;
}
.rows .ch
{
    margin-right: 1px;
    color: #b8b8b8;
}
.rows .books
{
    margin-right: 1px;
}
.selected
{
    background: #334d80;
    color: #f0b070;
}
.hl
{
    background: #5c5c5c;
    border-radius: 3px;
    outline: 1px solid #5c5c5c;
}
.selected .hl
{
    background: #7888a8;
    outline-color: #7888a8;
}
.obj
{
    color: #d88c58;
}
.data
{
    color: #2fb88c;
}
.data.hl
{
    background: #46635a;
    outline-color: #46635a;
}
.mod
{
    color: #6f8fdc;
}
.far
{
    margin-left: 15px;
}
.vis
{
    display: flex;
    gap: 5px;
    margin-left: auto;
    color: #e4e4e4;
}
.vis .ic
{
    width: 15px;
}
.hscroll
{
    width: 182px;
    height: 3px;
    margin: 0 0 2px 8px;
    border-radius: 2px;
    background: #444444;
}

/* properties */
.properties
{
    flex: 488 1 0;
    background: #303030;
}
.prop
{
    width: 119px;
    margin-left: 21px;
    margin-right: auto;
}
.properties .head
{
    padding-right: 7px;
}
.prop-body
{
    display: flex;
    flex: 1;
    min-height: 0;
}
.ptabs
{
    display: flex;
    flex-direction: column;
    gap: 3px;
    width: 28px;
    padding: 10px 0 0 2px;
    background: #1c1c1c;
    color: #b8b8b8;
}
.ptabs button
{
    height: 25px;
    justify-content: center;
    border-radius: 4px 0 0 4px;
    flex: none;
}
.ptabs .gap
{
    margin-bottom: 8px;
}
.ptabs .active
{
    background: #303030;
    color: #e89850;
}
.ptabs .red
{
    color: #c4606a;
}
.ptabs .blue
{
    color: #6f8fdc;
}
.ptabs .green
{
    color: #2fc890;
}
.panels
{
    display: flex;
    flex-direction: column;
    flex: 1;
    gap: 2px;
    min-width: 0;
    overflow: hidden;
    padding: 8px 3px 0 8px;
}
.vscroll
{
    width: 3px;
    height: 330px;
    margin-top: 12px;
    border-radius: 2px;
    background: #444444;
}
.context
{
    display: flex;
    align-items: center;
    gap: 7px;
    height: 22px;
    padding: 0 2px;
    margin-bottom: 13px;
    flex: none;
}
.context .muted
{
    margin-left: auto;
}
.wide.idblock
{
    margin-bottom: 8px;
}
.wide .idname
{
    flex: 1;
}
.panel
{
    flex: none;
    padding: 0 8px 0 9px;
    border-radius: 4px;
    background: #3b3b3b;
}
.pfields
{
    margin: 8px 0;
}
.prow + .pfields
{
    margin: 5px 0 0;
}
.prow
{
    display: grid;
    grid-template-columns: 66px 68px 18px 14px;
    align-items: center;
    justify-items: end;
}
.prow label
{
    padding-right: 11px;
    white-space: nowrap;
}
.prow input
{
    width: 68px;
    height: 19px;
    background: #545454;
    text-align: center;
    font-size: 12px;
    font-weight: 400;
}
.prow .ic
{
    color: #a0a0a0;
}
.prow .pick
{
    width: 68px;
    padding: 0 2px;
}
.dot
{
    width: 4px;
    height: 4px;
    border-radius: 2px;
    background: #d8d8d8;
}
.sub
{
    margin-top: 11px;
    padding-left: 14px;
}

/* status bar */
.status
{
    display: flex;
    align-items: center;
    height: 21px;
    padding: 0 12px 0 10px;
    color: #9a9a9a;
    flex: none;
}
.hint
{
    display: flex;
    align-items: center;
    gap: 3px;
    width: 211px;
}
.info
{
    display: flex;
    align-items: center;
    gap: 5px;
    margin-left: auto;
    white-space: nowrap;
}
```

FILE: script.js
```javascript
// number fields
function lock() {
    return '<svg class="ic"><use href="#lock"/></svg>';
}
document.querySelectorAll('.fields').forEach(function (el) {
    el.innerHTML = el.dataset.values.split(',').map(function (v, i) {
        return '<div class="frow"><label class="num"><span>' + 'XYZ'[i] + '</span><input value="' + v + '"></label>' + lock() + '</div>';
    }).join('');
});
document.querySelectorAll('.pfields').forEach(function (el) {
    const name = el.dataset.name;
    el.innerHTML = el.dataset.values.split(',').map(function (v, i) {
        const id = name.toLowerCase() + i;
        const text = i == 0 ? name + ' X' : 'XYZ'[i];
        return '<div class="prow"><label for="' + id + '">' + text + '</label><input id="' + id + '" value="' + v + '">' + lock() + '<i class="dot"></i></div>';
    }).join('');
});

// wireframe planet
const CX = 562, CY = 223, R = 111, D = 6.3, EYE = 0.4, TILT = 0.05;
function project(lat, lon, r) {
    const x = r * Math.cos(lat) * Math.sin(lon);
    const y = r * Math.sin(lat);
    const z = r * Math.cos(lat) * Math.cos(lon);
    const k = D / (D - z);
    const px = x * k, py = (y - EYE) * k + EYE;
    const sx = px * Math.cos(TILT) + py * Math.sin(TILT);
    const sy = px * Math.sin(TILT) - py * Math.cos(TILT);
    return (CX + sx * R).toFixed(1) + ' ' + (CY + sy * R).toFixed(1);
}
function line(points, color, dash, width) {
    return '<path d="M' + points.join('L') + '" fill="none" stroke="' + color + '" stroke-width="' + (width || 1) + '"' + (dash ? ' stroke-dasharray="' + dash + '"' : '') + '/>';
}
function meridian(deg, r) {
    const pts = [];
    for (let a = -90; a <= 90; a += 5) pts.push(project(a * Math.PI / 180, deg * Math.PI / 180, r));
    return pts;
}
function parallel(deg, from, r) {
    const pts = [];
    for (let a = from; a <= from + 180; a += 5) pts.push(project(deg * Math.PI / 180, a * Math.PI / 180, r));
    return pts;
}
const ORANGE = '#c8823a', BLACK = '#0c0c0c';
let planet = '';
for (let a = -76; a < 90; a += 40) planet += line(meridian(a, 0.98), BLACK, '9 2');
for (let a = 98; a < 270; a += 20) planet += line(meridian(a, 0.98), BLACK);
for (let a = 105; a < 260; a += 38) planet += line(meridian(a, 0.99), BLACK, '5 2');
for (let a = -87; a < 90; a += 20) planet += line(meridian(a, 0.98), ORANGE, '', 1.2);
[-82, -62, 64, 70, 80].forEach(function (a) {
    planet += line(meridian(a, 0.98), ORANGE, '3 2') + line(meridian(a + 2, 0.99), BLACK);
});
[-58, -32, -2, 22, 44, 72].forEach(function (a) {
    planet += line(parallel(a, -90, 0.99), BLACK);
    planet += line(parallel(a, 90, 0.99), ORANGE, '', 1.2);
});
planet += line(parallel(-72, -90, 0.99), BLACK) + line(parallel(80, 90, 1), ORANGE) + line(parallel(64, 90, 1), BLACK, '6 3');
planet += '<circle cx="562" cy="223" r="110" fill="none" stroke="' + BLACK + '" stroke-width="2"/>';
planet += '<circle cx="562" cy="223" r="111" fill="none" stroke="' + ORANGE + '" stroke-dasharray="2 3"/>';
planet += '<circle cx="562" cy="223" r="109" fill="none" stroke="' + ORANGE + '" stroke-dasharray="3 5"/>';
planet += '<path d="M490 304A109 109 0 0 0 630 309" fill="none" stroke="' + ORANGE + '" stroke-width="2" stroke-dasharray="5 1 2 2"/>';
planet += '<path d="M500 134A108 108 0 0 1 625 134" fill="none" stroke="' + BLACK + '" stroke-width="3" stroke-dasharray="6 1"/>';

document.getElementById('scene3d').innerHTML = '<g transform="translate(-2 -27)">' +
    '<rect x="279.5" y="65.500" width="563" height="317" fill="#3e3e3e" stroke="#4c2626"/>' +
    '<rect x="279.5" y="65.500" width="563" height="317" fill="none" stroke="#e8b8b0" stroke-dasharray="3 2"/>' +
    '<path d="M568 76L553 420M361 223.500H714M478 209L695 246" stroke="#0a0a0a"/>' + planet +
    '<path d="M561.500 208V148" stroke="#3f82d8" stroke-width="2"/><path d="M556 149l5.500-18 5.500 18z" fill="#3f82d8"/>' +
    '<path d="M577 223.500h60" stroke="#e0384c" stroke-width="2"/><path d="M636 218.500l19 5-19 5z" fill="#f0405a"/>' +
    '<rect x="598.500" y="175.500" width="11" height="11" fill="#4f8f1c" stroke="#6cb828"/>' +
    '<circle cx="561.500" cy="223.500" r="15" fill="none" stroke="#e0e0e0" stroke-width="2"/>' +
    '<circle cx="561.500" cy="223.500" r="10" fill="none" stroke="#c04040" stroke-width="1.500"/>' +
    '<circle cx="561.500" cy="223.500" r="10" fill="none" stroke="#fff" stroke-width="1.500" stroke-dasharray="4 4"/>' +
    '<circle cx="561.500" cy="223.500" r="2.500" fill="#f0a030"/></g>';

// node graph
const HEAD = { input: '#7c2c44', vector: '#3c3c83', tex: '#794a2c', color: '#6e6e1d', conv: '#246283', shader: '#2b652b', out: '#4a2028', env: '#8a5010' };
const NODES = [
    ['input', 357, 479, 24, 40], ['input', 357, 543, 24, 40], ['input', 358, 616, 23, 41], ['input', 377, 680, 23, 41], ['input', 546, 640, 24, 41],
    ['vector', 393, 476, 41, 60], ['vector', 393, 540, 41, 60], ['vector', 395, 613, 41, 60], ['vector', 582, 637, 41, 60],
    ['tex', 447, 481, 41, 47], ['tex', 447, 545, 41, 47], ['tex', 447, 613, 41, 47], ['env', 636, 642, 41, 47],
    ['color', 507, 469, 25, 28], ['conv', 504, 526, 24, 42], ['conv', 461, 678, 24, 42], ['conv', 564, 551, 25, 12],
    ['conv', 569, 588, 23, 25], ['shader', 630, 471, 41, 57], ['out', 776, 531, 24, 24], ['vector', 422, 686, 23, 27], ['vector', 686, 635, 23, 28]
];
const LINKS = [
    ['#6a68c0', 'M381 491L393 489M381 555L393 553M381 629L394 627M571 653L582 651'],
    ['#6a68c0', 'M435 480C441 485 440 526 446 526M435 544C441 549 440 590 446 590M437 618C443 620 441 659 446 659M624 642C629 645 630 687 635 687M401 697C410 697 412 711 422 711'],
    ['#c8c450', 'M489 486C496 486 497 493 504 494M490 550C498 550 499 494 506 491M532 474L630 481M590 557C606 557 612 524 629 522'],
    ['#a8a8a8', 'M489 550H503M528 531C565 531 580 488 629 488M593 594C612 594 608 524 629 522M486 683C520 683 530 611 569 611M446 695C452 695 455 702 461 702'],
    ['#c8c450', 'M489 619C505 618 518 616 530 613M677 648L686 650'],
    ['#a8a8a8', 'M530 613Q550 608 569 607'],
    ['#56b856', 'M671 477C715 477 725 541 776 541'],
    ['#6462c0', 'M709 640C745 640 735 548 776 548']
];
let graph = '<g transform="translate(-2 -422)">';
for (let x = 152; x < 1110; x += 89) {
    for (let y = 524; y < 740; y += 89) graph += '<rect x="' + x + '" y="' + y + '" width="1" height="1" fill="#2c2c2c"/>';
}
LINKS.forEach(function (l) {
    graph += '<path d="' + l[1] + '" fill="none" stroke="#111" stroke-width="3"/><path d="' + l[1] + '" fill="none" stroke="' + l[0] + '" stroke-width="1.800"/>';
});
function bar(x, y, w, h, color) {
    return '<rect x="' + x + '" y="' + y + '" width="' + w + '" height="' + h + '" fill="' + color + '"/>';
}
NODES.forEach(function (n) {
    const type = n[0], x = n[1], y = n[2], w = n[3], h = n[4];
    const mapping = type == 'vector' && h == 60;
    graph += '<rect x="' + (x - 0.5) + '" y="' + (y - 0.5) + '" width="' + (w + 1) + '" height="' + (h + 1) + '" rx="1" fill="#303030" stroke="#0c0c0c"/>';
    graph += bar(x, y, w, 3, HEAD[type]) + bar(x + 3, y + 1, w / 3, 1, '#a09090');
    if (mapping) {
        graph += bar(x + w - 8, y + 5, 5, 1, '#c8c8c8') + bar(x + 2, y + 9, 5, 1, '#a8a8a8') + bar(x + 12, y + 9, w - 15, 1, '#505050');
        [13, 17, 32, 46].forEach(function (dy) { graph += bar(x + 2, y + dy, 7, 1, '#a8a8a8'); });
        [21, 36, 51].forEach(function (dy) {
            graph += bar(x + 1, y + dy - 1, w - 2, 9, '#505050');
            for (let i = 0; i < 3; i++) graph += bar(x + 3, y + dy + i * 3, 2, 1, '#a0a0a0') + bar(x + w - 9, y + dy + i * 3, 5, 1, '#b0b0b0') + bar(x + 1, y + dy + 1 + i * 3, w - 2, 1, '#404040');
        });
        return;
    }
    for (let i = 0; y + 5 + i * 4 < y + h - 2; i++) {
        const ry = y + 5 + i * 4, len = 5 + (i * 5) % 6;
        if (i == 0) graph += bar(x + w - 8, ry, 6, 1, '#b8b8b8');
        else if (type == 'input') graph += bar(x + w - 3 - len, ry, len, 1, '#989898');
        else graph += bar(x + 2, ry, len, 1, '#989898') + (w > 25 ? bar(x + 16, ry, w - 19, 1, '#484848') : '');
    }
    if (type == 'tex' || type == 'env') graph += bar(x + 2, y + 12, w - 4, 3, '#1c1c1c') + bar(x + 3, y + 13, 3, 2, '#fff') + bar(x + 8, y + 13, 14, 1, '#b8a888') + bar(x + 27, y + 13, 2, 2, '#aaa') + bar(x + 33, y + 13, 2, 2, '#fff');
    if (type == 'conv' && h == 42) [27, 31, 35, 39].forEach(function (dy) { graph += bar(x + 2, y + dy - 1, w - 4, 3, '#505050') + bar(x + 4, y + dy, 9, 1, '#a8a8a8') + bar(x + 16, y + dy, 5, 1, '#a8a8a8'); });
    if (type == 'shader') graph += bar(x + 2, y + 25, w - 4, 1, '#4772b3') + bar(x + 2, y + 17, w - 4, 1, '#686868');
    if (type == 'input') graph += bar(x + 10, y + h - 8, 2, 2, '#fff');
});
graph += '<rect x="423" y="698" width="21" height="11" fill="#606060"/><circle cx="433.500" cy="703.500" r="4.500" fill="#eee"/>';
graph += bar(9, 742, 1104, 3, '#363636') + bar(1117, 458, 3, 274, '#363636') + '</g>';
document.getElementById('graph').innerHTML = graph;
```
